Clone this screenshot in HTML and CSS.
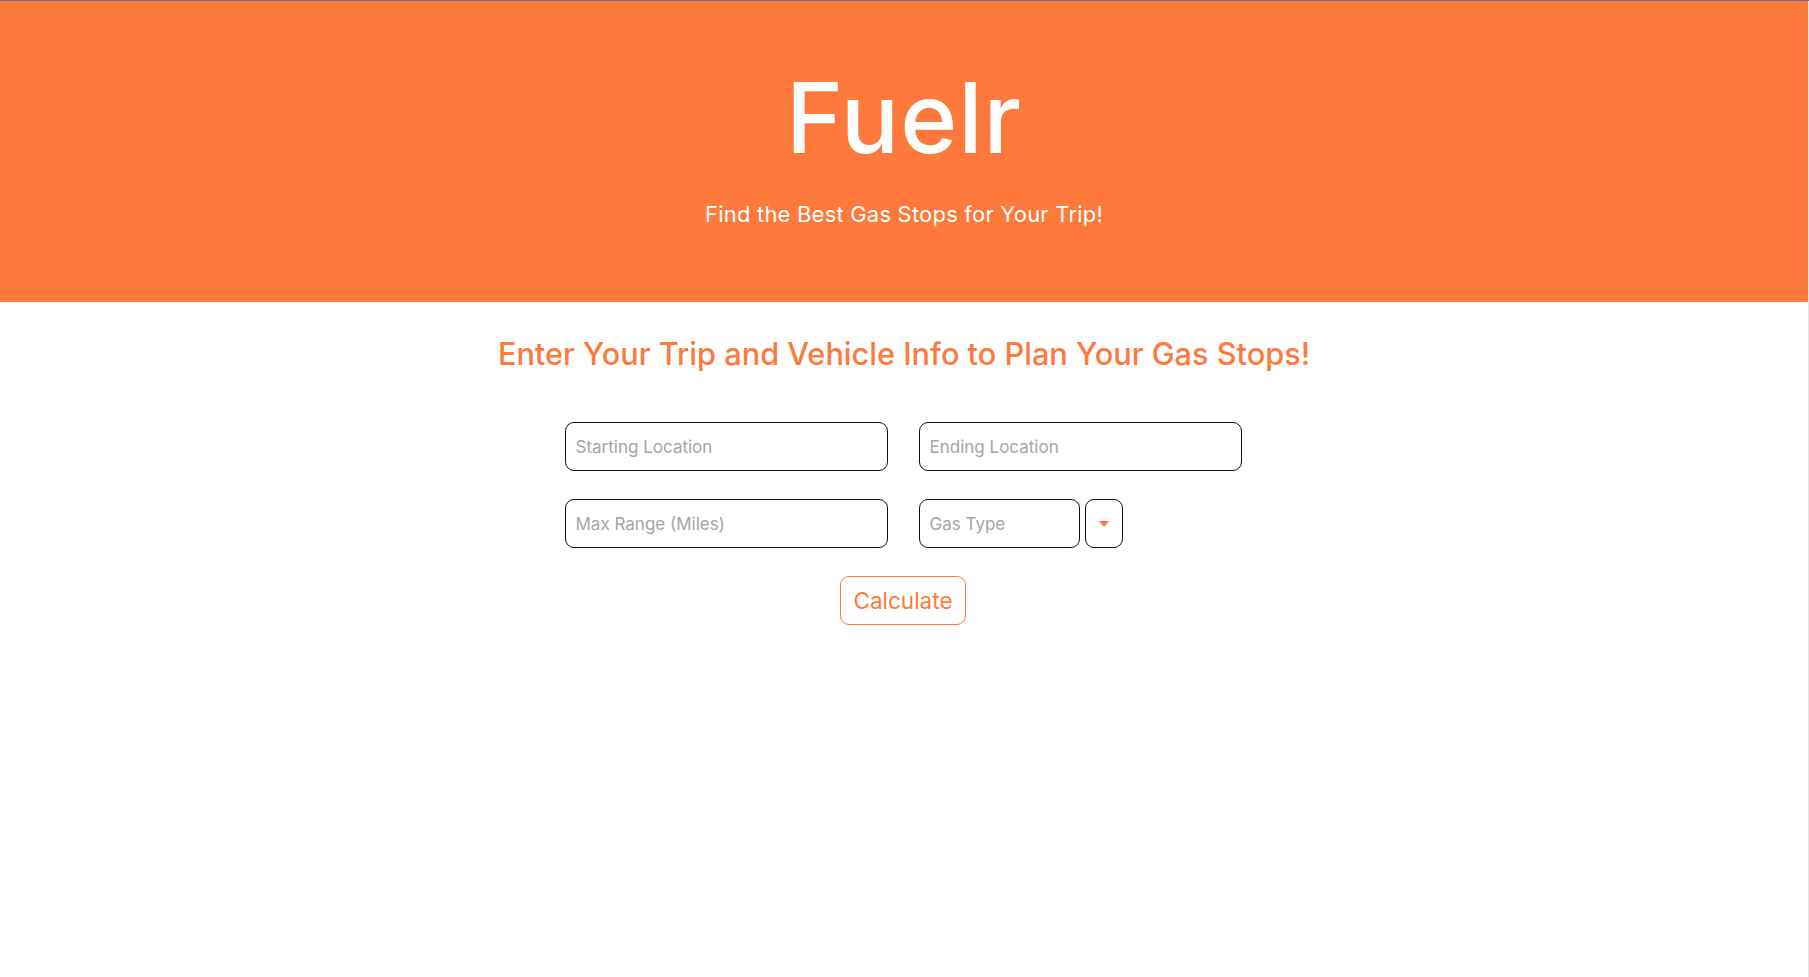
FILE: index.html
```html
<!DOCTYPE html>
<html lang="en">
<head>
<meta charset="utf-8">
<title>Fuelr</title>
<link rel="stylesheet" href="styles.css">
</head>
<body>
<div class="page">
  <header class="hero">
    <h1 class="hero-title">Fuelr</h1>
    <p class="hero-sub">Find the Best Gas Stops for Your Trip!</p>
  </header>
  <main class="main">
    <h2 class="intro">Enter Your Trip and Vehicle Info to Plan Your Gas Stops!</h2>
    <form class="trip-form">
      <div class="form-row">
        <input class="field" type="text" placeholder="Starting Location">
        <input class="field" type="text" placeholder="Ending Location">
      </div>
      <div class="form-row">
        <input class="field" type="text" placeholder="Max Range (Miles)">
        <div class="gas-group">
          <input class="field field-gas" type="text" placeholder="Gas Type">
          <button class="drop-btn" type="button" aria-label="Choose gas type">
            <svg width="10" height="6" viewBox="0 0 10 6"><path d="M0 0h10L5 6z" fill="#fe7a3c"/></svg>
          </button>
        </div>
      </div>
      <button class="calc-btn" type="button">Calculate</button>
    </form>
  </main>
</div>
</body>
</html>
```
FILE: styles.css
```css
* { box-sizing: border-box; }
html, body { margin: 0; padding: 0; }
body {
  font-family: Inter, "Noto Sans", sans-serif;
  background: #fff;
  border-top: 1px solid #63728f;
}
.page {
  width: 1809px;
  min-height: 976px;
  border-right: 1px solid #e4e4e4;
}
.hero {
  background: #fe7a3c;
  color: #fff;
  text-align: center;
  height: 301px;
  padding-top: 59px;
}
.hero-title {
  margin: 0;
  font-size: 97px;
  font-weight: 500;
  line-height: 116px;
  letter-spacing: 1px;
}
.hero-sub {
  margin: 24px 0 0;
  font-size: 22px;
  font-weight: 400;
  line-height: 28px;
  letter-spacing: 0.2px;
}
.main {
  display: flex;
  flex-direction: column;
  align-items: center;
}
.intro {
  margin: 32px 0 0;
  color: #fe7a3c;
  font-size: 30.7px;
  font-weight: 500;
  line-height: 40px;
}
.trip-form {
  margin-top: 48px;
  width: 677px;
  margin-right: 2px;
  display: flex;
  flex-direction: column;
  align-items: center;
  gap: 28px;
}
.form-row {
  width: 100%;
  display: grid;
  grid-template-columns: 323px 323px;
  justify-content: space-between;
}
.field {
  height: 49px;
  border: 1px solid #111;
  border-radius: 9px;
  padding: 0 10px;
  font-family: inherit;
  font-size: 17px;
  color: #333;
  background: #fff;
  outline: none;
  width: 100%;
}
.field::placeholder { color: #a6a6a6; }
.gas-group {
  display: flex;
  gap: 5px;
}
.field-gas { width: 161px; }
.drop-btn {
  width: 38px;
  height: 49px;
  border: 1px solid #111;
  border-radius: 9px;
  background: #fff;
  display: flex;
  align-items: center;
  justify-content: center;
  padding: 0;
}
.calc-btn {
  height: 49px;
  width: 126px;
  border: 1px solid #fe7a3c;
  border-radius: 9px;
  background: #fff;
  color: #fe7a3c;
  font-family: inherit;
  font-size: 22.5px;
  padding: 0;
}
```
